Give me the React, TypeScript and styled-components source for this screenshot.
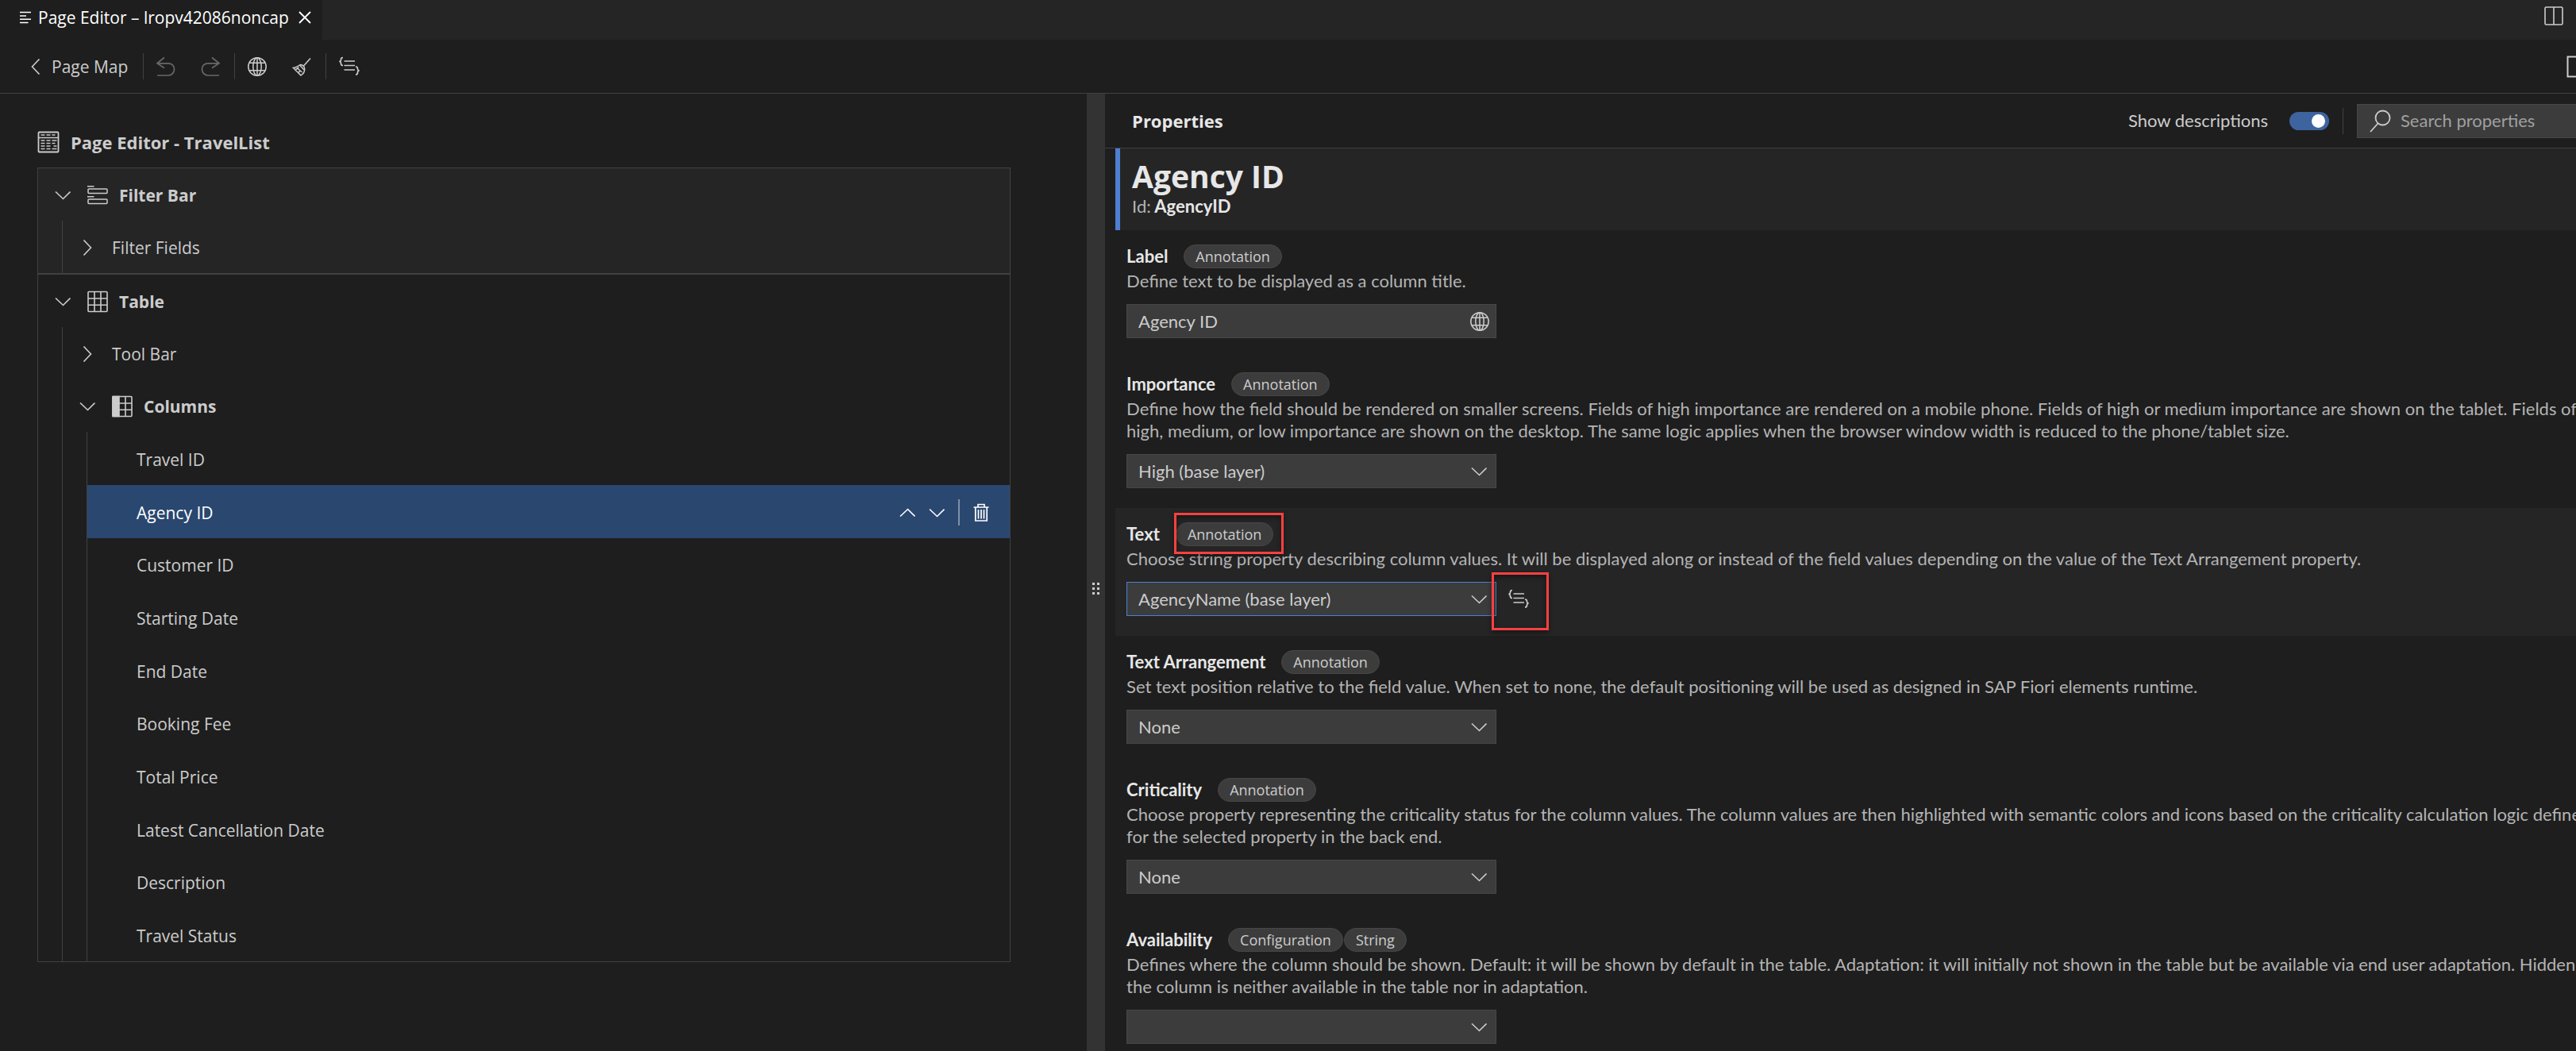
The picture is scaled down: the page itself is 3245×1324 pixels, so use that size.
import React, { useState } from 'react';
import styled, { createGlobalStyle, css } from 'styled-components';

const c = {
  bg: '#1e1e1e',
  raised: '#252526',
  line: '#414141',
  field: '#3c3c3c',
  fieldLine: '#474747',
  text: '#cccccc',
  strong: '#e7e7e7',
  muted: '#b4b4b4',
  accent: '#4d7fd1',
  selected: '#2a476f',
  mark: '#ff4040',
};

const font = {
  ui: '"Open Sans", "Noto Sans", sans-serif',
  form: 'Lato, "Open Sans", sans-serif',
};

const GlobalStyle = createGlobalStyle`
  *, *::before, *::after { box-sizing: border-box; }
  body {
    margin: 0;
    overflow: hidden;
    background: ${c.bg};
    color: ${c.text};
    font-family: ${font.ui};
    font-size: 21px;
    line-height: 28px;
  }
  button, input, select { font: inherit; color: inherit; }
  ul { list-style: none; margin: 0; padding: 0; }
  h1, h2, h3, p { margin: 0; font-size: inherit; }
  svg { display: block; flex: none; fill: none; stroke: currentColor; }
`;

/* ---------- shell ---------- */

const Shell = styled.div`
  height: 100vh;
  display: flex;
  flex-direction: column;
  overflow: hidden;
`;

const TabBar = styled.header`
  flex: none;
  display: flex;
  justify-content: space-between;
  height: 50px;
  padding-right: 16px;
  background: ${c.raised};
`;

const Tab = styled.div`
  display: flex;
  align-items: center;
  gap: 8px;
  padding: 0 14px 7px 24px;
  background: ${c.bg};
  color: #ffffff;
  white-space: nowrap;
`;

const PlainButton = styled.button`
  display: inline-flex;
  align-items: center;
  justify-content: center;
  padding: 0;
  border: 0;
  background: none;
  cursor: pointer;

  &:disabled {
    color: #686868;
    cursor: default;
  }
`;

const CloseButton = styled(PlainButton)`
  margin-left: 4px;
`;

const SplitButton = styled(PlainButton)`
  height: 40px;
`;

const Toolbar = styled.nav`
  flex: none;
  display: flex;
  align-items: center;
  height: 68px;
  padding: 0 0 0 39px;
  border-bottom: 1px solid ${c.line};
`;

const BackButton = styled(PlainButton)`
  gap: 14px;
  margin-right: 19px;
  white-space: nowrap;
`;

const ToolGroup = styled.div`
  display: flex;
  gap: 30px;
  padding: 0 17px 0 15px;
  border-left: 1px solid ${c.line};
  height: 33px;
`;

const Spacer = styled.div`
  flex: 1;
`;

const Workspace = styled.main`
  flex: 1;
  min-height: 0;
  display: grid;
  grid-template-columns: 42.19% 23px minmax(0, 1fr);
`;

/* ---------- outline ---------- */

const Outline = styled.section`
  padding: 47px 96px 0 47px;
`;

const OutlineTitle = styled.h1`
  display: flex;
  align-items: center;
  gap: 14px;
  height: 28px;
  margin-bottom: 18px;
  font-size: 22px;
  font-weight: 700;
`;

const TreeBox = styled.ul`
  border: 1px solid ${c.line};
`;

const TreeGroup = styled.li<{ $raised?: boolean }>`
  background: ${p => (p.$raised ? c.raised : 'transparent')};

  & + & {
    border-top: 2px solid ${c.line};
  }
`;

const Branch = styled.ul`
  margin-left: 30px;
  border-left: 1px solid ${c.line};
`;

const Row = styled.div<{ $strong?: boolean }>`
  display: flex;
  align-items: center;
  height: 66px;
  padding: 2px 0 0 21px;
  font-weight: ${p => (p.$strong ? 700 : 400)};
`;

const Twist = styled(PlainButton)`
  width: 20px;
  height: 20px;
  margin-right: 21px;
`;

const RowIcon = styled.span`
  margin-right: 14px;
`;

const Leaf = styled.li<{ $selected?: boolean }>`
  display: flex;
  align-items: center;
  justify-content: space-between;
  height: 67px;
  padding: 2px 26px 0 62px;

  &:nth-child(3n) {
    height: 66px;
  }

  ${p =>
    p.$selected &&
    css`
      background: ${c.selected};
      color: #ffffff;
    `}
`;

const RowActions = styled.div`
  display: flex;
  align-items: center;
  gap: 17px;
`;

const ActionDivider = styled.span`
  width: 2px;
  height: 33px;
  background: #7f91a9;
`;

const Splitter = styled.div`
  display: flex;
  align-items: center;
  justify-content: center;
  padding-top: 40px;
  background: #333333;
`;

const Grip = styled.div`
  display: grid;
  grid-template-columns: 3px 3px;
  gap: 3px;

  span {
    height: 3px;
    background: ${c.text};
  }
`;

/* ---------- properties ---------- */

const Panel = styled.section`
  overflow: hidden;
  font-family: ${font.form};
  font-size: 22px;
`;

const PanelHeader = styled.div`
  display: flex;
  align-items: center;
  height: 69px;
  padding-left: 34px;
  border-bottom: 1px solid ${c.line};
`;

const PanelTitle = styled.h2`
  flex: 1;
  color: ${c.strong};
  font-family: ${font.ui};
  font-weight: 700;
`;

const SwitchLabel = styled.label`
  margin-right: 27px;
`;

const Switch = styled.input`
  appearance: none;
  width: 50px;
  height: 23px;
  margin: 0 17px 0 0;
  padding: 3px 5px;
  border-radius: 12px;
  background: #3d649f;

  &::before {
    content: '';
    display: block;
    width: 17px;
    height: 17px;
    margin-left: auto;
    border-radius: 50%;
    background: #ffffff;
  }

  &:not(:checked)::before {
    margin-left: 0;
  }
`;

const HeaderDivider = styled.span`
  width: 1px;
  height: 33px;
  margin-right: 17px;
  background: ${c.line};
`;

const SearchBox = styled.label`
  display: flex;
  align-items: center;
  gap: 12px;
  width: 276px;
  height: 43px;
  padding-left: 15px;
  border: 1px solid ${c.fieldLine};
  border-right: 0;
  background: ${c.field};
`;

const SearchInput = styled.input`
  flex: 1;
  min-width: 0;
  padding: 0;
  border: 0;
  outline: 0;
  background: none;

  &::placeholder {
    color: #a0a0a0;
    opacity: 1;
  }
`;

const ObjectHeader = styled.div`
  height: 103px;
  margin-left: 13px;
  padding: 10px 0 0 15px;
  border-left: 6px solid ${c.accent};
  background: ${c.raised};
  color: ${c.strong};
`;

const ObjectTitle = styled.h2`
  font-family: ${font.ui};
  font-size: 39px;
  line-height: 50px;
  font-weight: 700;
`;

const ObjectId = styled.p`
  line-height: 26px;
  font-weight: 700;

  span {
    color: ${c.muted};
    font-weight: 400;
  }
`;

const Property = styled.div<{ $active?: boolean }>`
  margin-left: 13px;
  padding: 18px 0 25px 14px;
  background: ${p => (p.$active ? c.raised : 'transparent')};
`;

const PropertyHead = styled.div`
  display: flex;
  align-items: center;
  height: 30px;
`;

const PropertyLabel = styled.label`
  margin-right: 20px;
  color: ${c.strong};
  font-weight: 700;
`;

const Badge = styled.span`
  position: relative;
  height: 30px;
  margin-right: 1px;
  padding: 0 14px;
  border: 1px solid ${c.fieldLine};
  border-radius: 15px;
  background: ${c.field};
  font-family: ${font.ui};
  font-size: 18px;
  line-height: 28px;
`;

const Description = styled.p`
  margin: 2px 0 15px;
  color: ${c.muted};
  line-height: 28px;
  white-space: nowrap;
`;

const Control = styled.div`
  display: flex;
  align-items: center;
`;

const FieldWrap = styled.div<{ $iconGap: number }>`
  display: grid;
  width: 466px;
  align-items: center;

  > * {
    grid-area: 1 / 1;
  }

  > svg {
    justify-self: end;
    margin-right: ${p => p.$iconGap}px;
    pointer-events: none;
  }
`;

const fieldStyle = css`
  appearance: none;
  width: 100%;
  height: 43px;
  padding: 0 46px 0 14px;
  border: 1px solid ${c.fieldLine};
  border-radius: 0;
  outline: 0;
  background: ${c.field};
`;

const TextField = styled.input`
  ${fieldStyle}
`;

const SelectField = styled.select<{ $active?: boolean }>`
  ${fieldStyle}
  border-color: ${p => (p.$active ? c.accent : c.fieldLine)};
`;

const SourceButton = styled(PlainButton)`
  position: relative;
  width: 55px;
  height: 43px;
`;

/* Callout frame drawn over the item it points at. */
const Callout = styled.span<{ $inset: string }>`
  position: absolute;
  inset: ${p => p.$inset};
  border: 3px solid ${c.mark};
  box-shadow: 0 3px 6px rgba(0, 0, 0, 0.4), inset 0 3px 6px rgba(0, 0, 0, 0.4);
  pointer-events: none;
`;

/* ---------- icons ---------- */

const Chevron = ({ dir }: { dir: 'up' | 'down' | 'left' | 'right' }) => {
  const d = {
    down: 'M1 5.500 10.500 14.500 19.500 5.500',
    up: 'M1 14.500 10.500 5.500 19.500 14.500',
    left: 'M14.500 0.500 5.500 10 14.500 19.500',
    right: 'M5.500 0.500 14.500 10 5.500 19.500',
  }[dir];
  return (
    <svg width="20" height="20" viewBox="0 0 20 20" strokeWidth="1.6"><path d={d} /></svg>
  );
};

const BackIcon = () => (
  <svg width="12" height="20" viewBox="0 0 12 20" strokeWidth="1.6"><path d="M10.500 0.500 1.500 10 10.500 19.500" /></svg>
);

const FileIcon = () => (
  <svg width="16" height="16" viewBox="0 0 16 16" strokeWidth="1.6">
    <path d="M1 1.500h14M1 6h8M1 10.200h14M1 14.500h10.500" />
  </svg>
);

const CloseIcon = () => (
  <svg width="16" height="16" viewBox="0 0 16 16" strokeWidth="1.800"><path d="M1 1 15 15M15 1 1 15" /></svg>
);

const SplitIcon = () => (
  <svg width="24" height="24" viewBox="0 0 24 24" strokeWidth="1.600">
    <rect x="1" y="1" width="22" height="22" rx="1.500" /><path d="M12 1v22" />
  </svg>
);

const PanelIcon = () => (
  <svg width="12" height="28" viewBox="0 0 12 28" strokeWidth="2">
    <path d="M13 1.500H1.500v25H13" />
  </svg>
);

const UndoIcon = () => (
  <svg width="26" height="26" viewBox="0 0 26 26" strokeWidth="1.700">
    <path d="M11 1.500 2 8.800l9 6M2 8.800h14c4.500 0 7.500 3.200 7.500 7.400S20.500 24 16 24H2" />
  </svg>
);

const RedoIcon = () => (
  <svg width="26" height="26" viewBox="0 0 26 26" strokeWidth="1.700">
    <path d="M15 1.500 24 8.800l-9 6M24 8.800H10c-4.500 0-7.500 3.200-7.500 7.400S5.500 24 10 24h14" />
  </svg>
);

const GlobeIcon = () => (
  <svg width="26" height="26" viewBox="0 0 26 26" strokeWidth="1.500">
    <circle cx="13" cy="13" r="11.200" />
    <ellipse cx="13" cy="13" rx="5.200" ry="11.200" />
    <path d="M13 2v22M3 8.200h20M3 17.800h20" />
  </svg>
);

const BroomIcon = () => (
  <svg width="26" height="26" viewBox="0 0 26 26" strokeWidth="1.500">
    <path d="M24 2.500 15.500 12" />
    <path d="M11.500 10.500c3 .3 5 2.500 5.200 5.500.2 3.200-1.700 6-4.700 8-1.500-1.800-2.500-2.500-4.200-4.200C6 18.200 4.500 16.500 2.500 14.500c2.800 0 5.500-2 9-4z" />
    <path d="M11 11.500l5 5.500M5.500 16.500l4-2.500M9 20.500l2.500-3M7 14.500l6.500 5.500" />
  </svg>
);

const AnnotationIcon = () => (
  <svg width="28" height="26" viewBox="0 0 28 26" strokeWidth="1.700">
    <path d="M7.500 6h13.500M7.500 11.500h13.500M7.500 17h13.500" />
    <path d="M6 1.500c-2.200 0-2.500 1-2.500 2.500S3.500 6 1.500 6.300c2 .3 2 1.200 2 2.700s.3 2.500 2.500 2.500M22 13c2.200 0 2.500 1 2.500 2.500s0 2 2 2.300c-2 .3-2 1.200-2 2.700S24.200 23 22 23" />
  </svg>
);

const PageIcon = () => (
  <svg width="28" height="28" viewBox="0 0 28 28" strokeWidth="1.500">
    <rect x="1.500" y="1.500" width="25" height="25" rx="1" strokeWidth="1.800" />
    <path d="M1.500 8.500h25M4.500 5h5M11.500 5h5M18.500 5h4M4.500 12h5M11.500 12h5M18.500 12h6M4.500 15.500h5M11.500 15.500h5M18.500 15.500h4M4.500 19h5M11.500 19h5M20.500 19h4M4.500 22.500h5M11.500 22.500h5M18.500 22.500h6" />
  </svg>
);

const FilterIcon = () => (
  <svg width="26" height="26" viewBox="0 0 26 26" strokeWidth="1.500">
    <path d="M0 1.700h8.500M0 14.800h8.500" />
    <rect x="1" y="5" width="24" height="5.500" rx="1" /><rect x="1" y="18" width="24" height="5.500" rx="1" />
  </svg>
);

const TableIcon = () => (
  <svg width="26" height="28" viewBox="0 0 26 28" strokeWidth="1.600">
    <rect x="1" y="1.500" width="24" height="25" rx="1" />
    <path d="M9 1.500v25M17 1.500v25M1 10h24M1 18.300h24" />
  </svg>
);

const ColumnsIcon = () => (
  <svg width="26" height="28" viewBox="0 0 26 28" strokeWidth="1.600">
    <rect x="1" y="1.500" width="24" height="25" rx="1" />
    <rect x="1" y="1.500" width="8" height="25" fill="currentColor" />
    <path d="M17 1.500v25M9 10h16M9 18.300h16" />
  </svg>
);

const TrashIcon = () => (
  <svg width="20" height="24" viewBox="0 0 20 24" strokeWidth="1.700">
    <path d="M0.500 5h19M6 5V1.500h8V5M2.800 5v17h14.400V5M6.500 8v11.500M10 8v11.500M13.500 8v11.500" />
  </svg>
);

const SearchIcon = () => (
  <svg width="27" height="29" viewBox="0 0 27 29" strokeWidth="1.800">
    <circle cx="16.500" cy="10.500" r="9" /><path d="M10.500 17.500 1 28" />
  </svg>
);

/* ---------- data ---------- */

const columns = [
  'Travel ID', 'Agency ID', 'Customer ID', 'Starting Date', 'End Date',
  'Booking Fee', 'Total Price', 'Latest Cancellation Date', 'Description', 'Travel Status',
];

type PropertyDef = {
  id: string;
  label: string;
  badges: string[];
  lines: string[];
  value: string;
  kind?: 'text';
  active?: boolean;
};

const properties: PropertyDef[] = [
  {
    id: 'label', label: 'Label', badges: ['Annotation'], kind: 'text', value: 'Agency ID',
    lines: ['Define text to be displayed as a column title.'],
  },
  {
    id: 'importance', label: 'Importance', badges: ['Annotation'], value: 'High (base layer)',
    lines: [
      'Define how the field should be rendered on smaller screens. Fields of high importance are rendered on a mobile phone. Fields of high or medium importance are shown on the tablet. Fields of',
      'high, medium, or low importance are shown on the desktop. The same logic applies when the browser window width is reduced to the phone/tablet size.',
    ],
  },
  {
    id: 'text', label: 'Text', badges: ['Annotation'], value: 'AgencyName (base layer)', active: true,
    lines: ['Choose string property describing column values. It will be displayed along or instead of the field values depending on the value of the Text Arrangement property.'],
  },
  {
    id: 'arrangement', label: 'Text Arrangement', badges: ['Annotation'], value: 'None',
    lines: ['Set text position relative to the field value. When set to none, the default positioning will be used as designed in SAP Fiori elements runtime.'],
  },
  {
    id: 'criticality', label: 'Criticality', badges: ['Annotation'], value: 'None',
    lines: [
      'Choose property representing the criticality status for the column values. The column values are then highlighted with semantic colors and icons based on the criticality calculation logic defined',
      'for the selected property in the back end.',
    ],
  },
  {
    id: 'availability', label: 'Availability', badges: ['Configuration', 'String'], value: '',
    lines: [
      'Defines where the column should be shown. Default: it will be shown by default in the table. Adaptation: it will initially not shown in the table but be available via end user adaptation. Hidden:',
      'the column is neither available in the table nor in adaptation.',
    ],
  },
];

/* ---------- views ---------- */

const PropertyView = ({ item }: { item: PropertyDef }) => (
  <Property $active={item.active}>
    <PropertyHead>
      <PropertyLabel htmlFor={item.id}>{item.label}</PropertyLabel>
      {item.badges.map(b => (
        <Badge key={b}>
          {b}
          {item.active && <Callout $inset="-13px -14px -11px -3px" />}
        </Badge>
      ))}
    </PropertyHead>
    <Description>
      {item.lines.map((l, i) => (
        <React.Fragment key={l}>{i > 0 && <br />}{l}</React.Fragment>
      ))}
    </Description>
    <Control>
      <FieldWrap $iconGap={item.kind === 'text' ? 8 : 12}>
        {item.kind === 'text' ? (
          <>
            <TextField id={item.id} type="text" defaultValue={item.value} />
            <GlobeIcon />
          </>
        ) : (
          <>
            <SelectField id={item.id} $active={item.active} defaultValue={item.value}>
              <option value={item.value}>{item.value}</option>
            </SelectField>
            <Chevron dir="down" />
          </>
        )}
      </FieldWrap>
      {item.active && (
        <SourceButton type="button" aria-label="Show in source code">
          <AnnotationIcon />
          <Callout $inset="-12px -11px -18px -6px" />
        </SourceButton>
      )}
    </Control>
  </Property>
);

const TreeRow = ({ label, open, icon }: { label: string; open?: boolean; icon?: React.ReactNode }) => (
  <Row $strong={open}>
    <Twist type="button" aria-label={open ? 'Collapse' : 'Expand'} aria-expanded={!!open}>
      <Chevron dir={open ? 'down' : 'right'} />
    </Twist>
    {icon && <RowIcon>{icon}</RowIcon>}
    {label}
  </Row>
);

export default function App() {
  const [showDescriptions, setShowDescriptions] = useState(true);

  return (
    <Shell>
      <GlobalStyle />
      <TabBar>
        <Tab>
          <FileIcon />
          Page Editor – lropv42086noncap
          <CloseButton type="button" aria-label="Close"><CloseIcon /></CloseButton>
        </Tab>
        <SplitButton type="button" aria-label="Split editor"><SplitIcon /></SplitButton>
      </TabBar>

      <Toolbar>
        <BackButton type="button"><BackIcon />Page Map</BackButton>
        <ToolGroup>
          <PlainButton type="button" aria-label="Undo" disabled><UndoIcon /></PlainButton>
          <PlainButton type="button" aria-label="Redo" disabled><RedoIcon /></PlainButton>
        </ToolGroup>
        <ToolGroup>
          <PlainButton type="button" aria-label="Translations"><GlobeIcon /></PlainButton>
          <PlainButton type="button" aria-label="Clean up"><BroomIcon /></PlainButton>
        </ToolGroup>
        <ToolGroup>
          <PlainButton type="button" aria-label="Source code"><AnnotationIcon /></PlainButton>
        </ToolGroup>
        <Spacer />
        <PlainButton type="button" aria-label="Toggle panel"><PanelIcon /></PlainButton>
      </Toolbar>

      <Workspace>
        <Outline>
          <OutlineTitle><PageIcon />Page Editor - TravelList</OutlineTitle>
          <TreeBox>
            <TreeGroup $raised>
              <TreeRow label="Filter Bar" open icon={<FilterIcon />} />
              <Branch>
                <li><TreeRow label="Filter Fields" /></li>
              </Branch>
            </TreeGroup>
            <TreeGroup>
              <TreeRow label="Table" open icon={<TableIcon />} />
              <Branch>
                <li><TreeRow label="Tool Bar" /></li>
                <li>
                  <TreeRow label="Columns" open icon={<ColumnsIcon />} />
                  <Branch>
                    {columns.map(name => (
                      <Leaf key={name} $selected={name === 'Agency ID'}>
                        {name}
                        {name === 'Agency ID' && (
                          <RowActions>
                            <PlainButton type="button" aria-label="Move up"><Chevron dir="up" /></PlainButton>
                            <PlainButton type="button" aria-label="Move down"><Chevron dir="down" /></PlainButton>
                            <ActionDivider />
                            <PlainButton type="button" aria-label="Delete"><TrashIcon /></PlainButton>
                          </RowActions>
                        )}
                      </Leaf>
                    ))}
                  </Branch>
                </li>
              </Branch>
            </TreeGroup>
          </TreeBox>
        </Outline>

        <Splitter role="separator" aria-orientation="vertical">
          <Grip><span /><span /><span /><span /><span /><span /></Grip>
        </Splitter>

        <Panel>
          <PanelHeader>
            <PanelTitle>Properties</PanelTitle>
            <SwitchLabel htmlFor="descriptions">Show descriptions</SwitchLabel>
            <Switch
              id="descriptions"
              type="checkbox"
              role="switch"
              checked={showDescriptions}
              onChange={e => setShowDescriptions(e.target.checked)}
            />
            <HeaderDivider />
            <SearchBox>
              <SearchIcon />
              <SearchInput type="text" placeholder="Search properties" aria-label="Search properties" />
            </SearchBox>
          </PanelHeader>
          <ObjectHeader>
            <ObjectTitle>Agency ID</ObjectTitle>
            <ObjectId><span>Id:</span> AgencyID</ObjectId>
          </ObjectHeader>
          {properties.map(item => <PropertyView key={item.id} item={item} />)}
        </Panel>
      </Workspace>
    </Shell>
  );
}
